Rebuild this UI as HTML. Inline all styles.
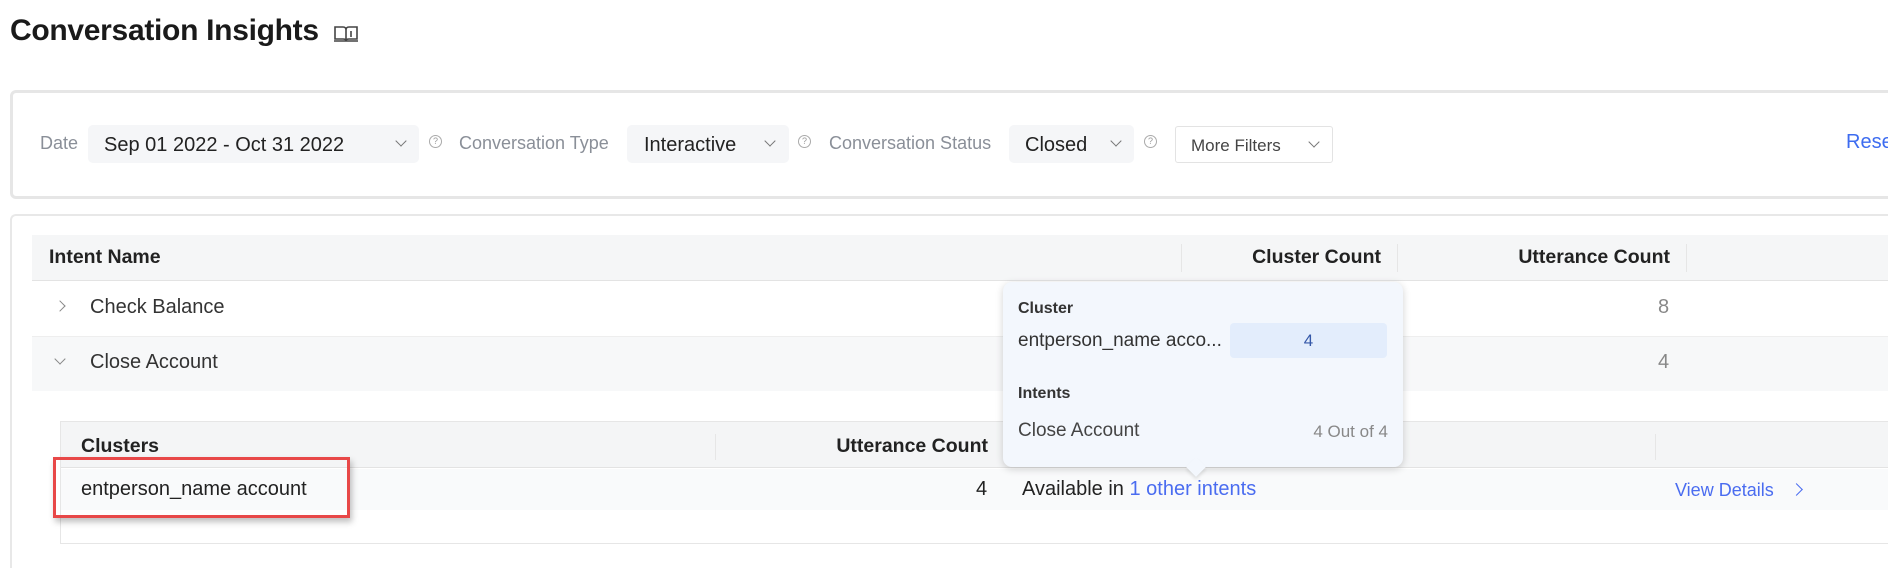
<!DOCTYPE html>
<html style="width:1888px;height:568px;overflow:hidden"><head><meta charset="utf-8"><style>
*{box-sizing:border-box;margin:0;padding:0}
body{width:1888px;height:568px;overflow:hidden;background:#fff;font-family:"Liberation Sans",sans-serif;color:#222;position:relative}
.a{position:absolute;white-space:nowrap}
.lbl{font-size:18px;color:#8a8f98;top:133px}
.dd{position:absolute;top:125px;height:38px;background:#f5f6f8;border-radius:5px}
.ddt{position:absolute;top:9px;font-size:20px;color:#222}
.chev{position:absolute;top:12px;width:8px;height:8px;border-right:1.5px solid #777;border-bottom:1.5px solid #777;transform:rotate(45deg)}
.help{position:absolute;top:135px;width:13px;height:13px;border:1.3px solid #aaa;border-radius:50%;font-size:9px;color:#999;text-align:center;line-height:11px}
.hd{font-size:19.5px;font-weight:bold;color:#222}
.txt{font-size:20px;color:#333}
.sep{position:absolute;width:1px;background:#e6e6e6}
</style></head><body>

<div class="a" style="left:10px;top:14px;font-size:30px;font-weight:bold;color:#1a1a1a;letter-spacing:-0.3px">Conversation Insights</div>
<svg class="a" style="left:333px;top:24px" width="26" height="19" viewBox="0 0 26 19"><path d="M2 3h8q3 0 3 3v11q0-2-3-2H2z M24 3h-8q-3 0-3 3v11q0-2 3-2h8z M1 17h24" fill="none" stroke="#444" stroke-width="1.6"/><path d="M18 7v6" stroke="#444" stroke-width="1.6"/></svg>

<div class="a" style="left:10px;top:90px;width:1900px;height:109px;border:3px solid #e6e6e6;border-radius:6px"></div>
<div class="a lbl" style="left:40px">Date</div>
<div class="dd" style="left:88px;width:331px"><div class="ddt" style="left:16px">Sep 01 2022 - Oct 31 2022</div><div class="chev" style="left:309px"></div></div>
<div class="help" style="left:429px">?</div>
<div class="a lbl" style="left:459px">Conversation Type</div>
<div class="dd" style="left:627px;width:162px"><div class="ddt" style="left:17px">Interactive</div><div class="chev" style="left:139px"></div></div>
<div class="help" style="left:798px">?</div>
<div class="a lbl" style="left:829px">Conversation Status</div>
<div class="dd" style="left:1009px;width:125px"><div class="ddt" style="left:16px">Closed</div><div class="chev" style="left:103px"></div></div>
<div class="help" style="left:1144px">?</div>
<div class="a" style="left:1175px;top:126px;width:158px;height:37px;border:1px solid #e3e3e3;border-radius:3px;background:#fff"><div class="a" style="left:15px;top:9px;font-size:17px;color:#444">More Filters</div><div class="chev" style="left:134px;top:11px"></div></div>
<div class="a" style="left:1846px;top:131px;font-size:20px;color:#3d6cf0;width:42px;overflow:hidden">Reset</div>

<div class="a" style="left:10px;top:214px;width:1878px;height:354px;border:2px solid #e8e8e8;border-right:none;border-bottom:none;border-radius:6px 0 0 0"></div>
<div class="a" style="left:32px;top:235px;width:1856px;height:46px;background:#f5f6f7;border-bottom:1px solid #e3e3e3"></div>
<div class="a hd" style="left:49px;top:246px">Intent Name</div>
<div class="sep" style="left:1181px;top:244px;height:28px"></div>
<div class="sep" style="left:1397px;top:244px;height:28px"></div>
<div class="sep" style="left:1686px;top:244px;height:28px"></div>
<div class="a hd" style="right:507px;top:246px">Cluster Count</div>
<div class="a hd" style="right:218px;top:246px">Utterance Count</div>

<div class="a" style="left:32px;top:336px;width:1856px;height:1px;background:#eee"></div>
<div class="a" style="left:56px;top:302px;width:8px;height:8px;border-right:1.5px solid #888;border-top:1.5px solid #888;transform:rotate(45deg)"></div>
<div class="a txt" style="left:90px;top:296px">Check Balance</div>
<div class="a txt" style="left:1658px;top:296px;color:#888">8</div>

<div class="a" style="left:32px;top:337px;width:1856px;height:54px;background:#f7f8f9"></div>
<div class="a" style="left:56px;top:355px;width:8px;height:8px;border-right:1.5px solid #888;border-bottom:1.5px solid #888;transform:rotate(45deg)"></div>
<div class="a txt" style="left:90px;top:351px">Close Account</div>
<div class="a txt" style="left:1658px;top:351px;color:#888">4</div>

<div class="a" style="left:60px;top:421px;width:1828px;height:123px;border:1px solid #e6e6e6;border-right:none"></div>
<div class="a" style="left:61px;top:422px;width:1827px;height:46px;background:#f4f5f6;border-bottom:1px solid #e3e3e3"></div>
<div class="sep" style="left:715px;top:434px;height:26px"></div>
<div class="sep" style="left:1655px;top:434px;height:26px"></div>
<div class="a hd" style="left:81px;top:435px">Clusters</div>
<div class="a hd" style="right:900px;top:435px">Utterance Count</div>
<div class="a" style="left:61px;top:469px;width:1827px;height:41px;background:#f9fafb"></div>
<div class="a txt" style="left:81px;top:478px;color:#222">entperson_name account</div>
<div class="a txt" style="left:976px;top:478px;color:#222">4</div>
<div class="a txt" style="left:1022px;top:478px;color:#222">Available in <span style="color:#4a6cf0">1 other intents</span></div>
<div class="a" style="left:1675px;top:480px;font-size:18px;color:#4a6cf0">View Details</div>
<div class="a" style="left:1792px;top:485px;width:9px;height:9px;border-right:1.8px solid #4a6cf0;border-top:1.8px solid #4a6cf0;transform:rotate(45deg)"></div>

<div class="a" style="left:53px;top:457px;width:297px;height:61px;border:3px solid #e84848;box-shadow:2px 4px 6px rgba(0,0,0,0.25)"></div>

<div class="a" style="left:1003px;top:282px;width:400px;height:185px;background:#f3f7fd;border-radius:9px;box-shadow:0 2px 8px rgba(0,0,0,0.18)"></div>
<div class="a" style="left:1189px;top:460px;width:14px;height:14px;background:#f3f7fd;transform:rotate(45deg);box-shadow:2px 2px 3px rgba(0,0,0,0.1)"></div>
<div class="a" style="left:1018px;top:300px;font-size:16px;font-weight:bold;color:#333">Cluster</div>
<div class="a" style="left:1018px;top:330px;font-size:19px;color:#333">entperson_name acco...</div>
<div class="a" style="left:1230px;top:323px;width:157px;height:35px;background:#e3edfc;border-radius:4px;text-align:center;line-height:35px;font-size:17px;color:#3558a8">4</div>
<div class="a" style="left:1018px;top:385px;font-size:16px;font-weight:bold;color:#333">Intents</div>
<div class="a" style="left:1018px;top:420px;font-size:19px;color:#444">Close Account</div>
<div class="a" style="right:500px;top:422px;font-size:17px;color:#888">4 Out of 4</div>
</body></html>
